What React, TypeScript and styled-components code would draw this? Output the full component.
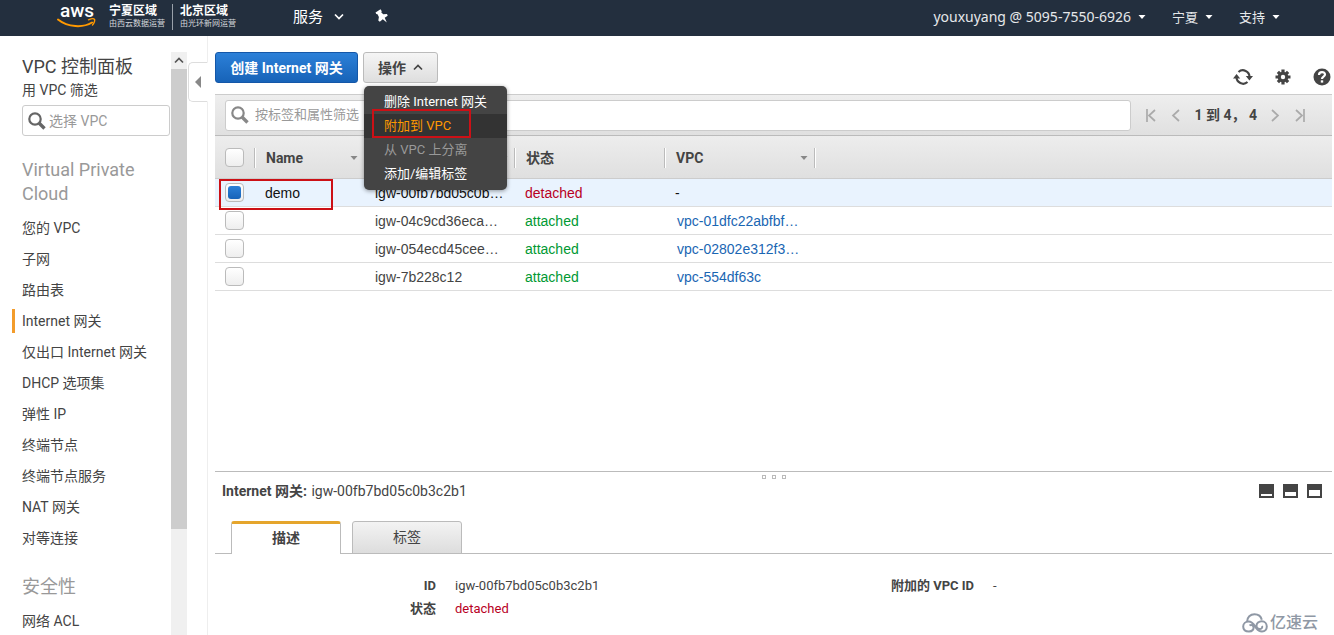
import React, { useState } from 'react';
import styled, { createGlobalStyle, css } from 'styled-components';

const GlobalStyle = createGlobalStyle`
  *, *::before, *::after { box-sizing: border-box; }
  body {
    margin: 0;
    background: #fff;
    color: #444;
    font: 14px/20px Roboto, 'Noto Sans CJK SC', sans-serif;
  }
  button, input { font: inherit; color: inherit; }
  button { margin: 0; padding: 0; border: 0; background: none; cursor: pointer; }
  a { color: inherit; text-decoration: none; }
  h1, h2, ul, dl, dd { margin: 0; padding: 0; font-weight: 400; }
  ul { list-style: none; }
  svg { display: block; flex: none; }
`;

const Page = styled.div`
  display: flex;
  flex-direction: column;
  height: 100vh;
  overflow: hidden;
`;

/* ---------- top bar ---------- */

const TopBar = styled.header`
  display: flex;
  align-items: center;
  flex: none;
  height: 36px;
  padding: 0 54px 0 57px;
  background: #232f3e;
  color: #fff;
`;

const Logo = styled.a`
  display: flex;
  flex-direction: column;
  align-items: center;
  width: 40px;
  height: 36px;
  font: 500 19px/22px Roboto, sans-serif;
  svg { margin-top: -4px; }
`;

const Region = styled.div`
  height: 26px;
  margin: 0 0 2px 12px;
  font-size: 8px;
  line-height: 12px;
  color: #d5d8dc;
  white-space: nowrap;
  & + & {
    margin-left: 7px;
    padding-left: 7px;
    border-left: 1px solid #9aa1aa;
  }
`;

const RegionName = styled.strong`
  display: block;
  font-size: 12px;
  line-height: 14px;
  color: #fff;
`;

const TopButton = styled.button<{ $size?: number }>`
  display: flex;
  align-items: center;
  gap: ${p => (p.$size === 15 ? 11 : 7)}px;
  font-family: 'Noto Sans', 'Noto Sans CJK SC', sans-serif;
  font-size: ${p => p.$size ?? 13}px;
  line-height: 20px;
  color: ${p => (p.$size === 15 ? '#fff' : '#e6e8ea')};
  white-space: nowrap;
`;

const ServiceMenu = styled.nav`
  display: flex;
  align-items: center;
  gap: 31px;
  margin: 0 0 4px 57px;
`;

const AccountMenu = styled.nav`
  display: flex;
  align-items: center;
  gap: 26px;
  margin: 0 0 2px auto;
`;

/* ---------- side navigation ---------- */

const Body = styled.div`
  display: flex;
  flex: 1;
  min-height: 0;
`;

const Sidebar = styled.aside`
  flex: none;
  width: 171px;
  padding: 19px 1px 0 12px;
  overflow: hidden;
`;

const SideTitle = styled.h1`
  padding-left: 10px;
  font-size: 18px;
  line-height: 24px;
`;

const SideLabel = styled.label`
  display: block;
  padding: 1px 0 5px 10px;
`;

const SearchField = styled.div`
  display: flex;
  align-items: center;
  gap: 3px;
  height: 31px;
  padding-left: 5px;
  border: 1px solid #ccc;
  border-radius: 3px;
  background: #fff;
  input {
    flex: 1;
    min-width: 0;
    padding: 0;
    border: 0;
    outline: 0;
    background: none;
  }
  input::placeholder { color: #999; opacity: 1; }
`;

const SideSearch = styled(SearchField)`
  margin-left: 10px;
`;

const SideHeading = styled.h2`
  margin-top: 22px;
  padding: 0 20px 0 10px;
  font-size: 18px;
  line-height: 24px;
  color: #999;
`;

const SideList = styled.ul`
  padding-top: 6px;
`;

const SideItem = styled.li`
  display: flex;
  align-items: center;
  height: 31px;
`;

const SideLink = styled.a<{ $active?: boolean }>`
  padding-left: 7px;
  border-left: 3px solid ${p => (p.$active ? '#f39c2b' : 'transparent')};
  line-height: 24px;
`;

const ScrollTrack = styled.div`
  flex: none;
  width: 16px;
  margin-top: 16px;
  background: #f0f0f0;
`;

const ScrollArrow = styled.button`
  display: flex;
  align-items: center;
  justify-content: center;
  width: 100%;
  height: 17px;
`;

const ScrollThumb = styled.div`
  height: 79%;
  max-height: 460px;
  background: #cdcdcd;
`;

const Gutter = styled.div`
  flex: none;
  width: 21px;
  padding: 26px 0 0 1px;
  border-right: 1px solid #eee;
`;

const CollapseButton = styled.button`
  display: flex;
  align-items: center;
  justify-content: center;
  width: 20px;
  height: 40px;
  border: 1px solid #ddd;
  border-right-color: #fff;
  border-radius: 5px 0 0 5px;
  background: #fff;
`;

/* ---------- main panel ---------- */

const Main = styled.main`
  display: flex;
  flex: 1;
  flex-direction: column;
  min-width: 0;
  padding: 16px 2px 0 7px;
`;

const ActionBar = styled.div`
  display: flex;
  align-items: flex-start;
  gap: 5px;
  height: 42px;
`;

const Button = styled.button<{ $primary?: boolean }>`
  display: flex;
  align-items: center;
  justify-content: center;
  gap: 7px;
  height: 31px;
  padding: 0 14px;
  border: 1px solid #bbb;
  border-radius: 3px;
  background: linear-gradient(#f5f5f5, #dedede);
  font-weight: 700;
  white-space: nowrap;
  ${p =>
    p.$primary &&
    css`
      min-width: 143px;
      border-color: #1457a8;
      background: linear-gradient(#2c80d8, #1763b8);
      color: #fff;
    `}
`;

const MenuAnchor = styled.div`
  position: relative;
`;

const Menu = styled.div`
  position: absolute;
  z-index: 2;
  top: 34px;
  left: 1px;
  width: 143px;
  padding: 4px 0;
  border-radius: 5px;
  background: #444;
  box-shadow: 0 1px 4px rgba(0, 0, 0, 0.4);
`;

const MenuItem = styled.button<{ $active?: boolean }>`
  display: block;
  width: 100%;
  height: 24px;
  padding-left: 20px;
  background: ${p => (p.$active ? '#333' : 'none')};
  color: ${p => (p.$active ? '#f90' : '#fff')};
  font-size: 13px;
  text-align: left;
  white-space: nowrap;
  &:disabled { color: #999; }
`;

const MenuHighlight = styled.div`
  position: absolute;
  top: 23px;
  left: 8px;
  width: 99px;
  height: 29px;
  border: 2px solid #cc1016;
  pointer-events: none;
`;

const Tools = styled.div`
  display: flex;
  align-items: center;
  align-self: flex-end;
  gap: 22px;
  height: 34px;
  margin: 0 1px 0 auto;
`;

const FilterBar = styled.div`
  display: flex;
  align-items: center;
  flex: none;
  height: 42px;
  padding: 0 26px 0 10px;
  border-top: 1px solid #ccc;
  border-bottom: 1px solid #bbb;
  background: linear-gradient(#eee, #e0e0e0);
`;

const FilterField = styled(SearchField)`
  flex: 1;
  gap: 6px;
  font-size: 13px;
`;

const Pager = styled.div`
  display: flex;
  align-items: center;
  gap: 12px;
  margin-left: 14px;
  font-weight: 700;
`;

const PagerText = styled.span`
  padding: 0 1px;
  white-space: pre;
`;

const Grid = styled.table`
  width: 100%;
  border-collapse: separate;
  border-spacing: 0;
  table-layout: fixed;
`;

const Cell = styled.td`
  height: 28px;
  padding: 0 0 0 10px;
  border-bottom: 1px solid #ddd;
  white-space: nowrap;
`;

const HeadCell = styled.th`
  height: 43px;
  padding: 1px 0 0;
  border-bottom: 1px solid #ccc;
  text-align: left;
`;

const HeadRow = styled.tr`
  background: linear-gradient(#ededed, #dfdfdf);
`;

const HeadInner = styled.div<{ $start?: number }>`
  display: flex;
  align-items: center;
  height: 20px;
  padding: 0 6px 0 ${p => p.$start ?? 11}px;
  border-right: 1px solid #bbb;
  box-shadow: 1px 0 #fff;
  svg { margin-left: auto; }
`;

const Row = styled.tr<{ $selected?: boolean }>`
  background: ${p => (p.$selected ? '#e9f3fe' : '#fff')};
  color: ${p => (p.$selected ? '#111' : '#444')};
  font-family: 'Liberation Sans', 'Noto Sans CJK SC', sans-serif;
`;

const RowHighlight = styled.span`
  position: absolute;
  top: -4px;
  left: -6px;
  width: 114px;
  height: 31px;
  border: 2px solid #cc1016;
  pointer-events: none;
`;

const CheckWrap = styled.span`
  position: relative;
  display: flex;
`;

const Check = styled.input`
  appearance: none;
  display: flex;
  align-items: center;
  justify-content: center;
  width: 19px;
  height: 19px;
  margin: 0;
  border: 1px solid #bbb;
  border-radius: 4px;
  background: linear-gradient(#fff, #eee);
  &:checked::before {
    content: '';
    width: 13px;
    height: 13px;
    border-radius: 3px;
    background: linear-gradient(#2c80d8, #1763b8);
  }
`;

const Status = styled.span<{ $value: string }>`
  color: ${p => (p.$value === 'attached' ? '#093' : '#b8001f')};
`;

const VpcLink = styled.a`
  padding-left: 2px;
  color: #1a66b3;
`;

/* ---------- details ---------- */

const GridArea = styled.div`
  flex: 1;
  min-height: 0;
`;

const Details = styled.section`
  flex: none;
  height: 164px;
  border-top: 1px solid #bbb;
`;

const Grip = styled.div`
  display: flex;
  justify-content: center;
  gap: 6px;
  height: 8px;
  padding-top: 3px;
  span {
    width: 4px;
    height: 4px;
    border: 1px solid #bbb;
  }
`;

const DetailsHead = styled.div`
  display: flex;
  align-items: center;
  justify-content: space-between;
  height: 22px;
  padding: 0 10px 0 7px;
  strong { margin-right: 1px; }
`;

const PaneButtons = styled.div`
  display: flex;
  gap: 9px;
`;

const PaneButton = styled.button<{ $open: number }>`
  display: flex;
  align-items: flex-end;
  width: 15px;
  height: 14px;
  padding: 0 2px 2px;
  background: #444;
  &::after {
    content: '';
    width: 100%;
    height: ${p => p.$open}px;
    background: #fff;
  }
`;

const Tabs = styled.div`
  display: flex;
  gap: 11px;
  margin-top: 19px;
  padding-left: 16px;
  box-shadow: inset 0 -1px #bbb;
`;

const Tab = styled.button<{ $active?: boolean }>`
  width: 110px;
  height: 33px;
  padding-bottom: 2px;
  border: 1px solid #bbb;
  border-radius: 3px 3px 0 0;
  background: linear-gradient(#f3f3f3, #ddd);
  ${p =>
    p.$active &&
    css`
      border-top: 3px solid #e5a52c;
      border-bottom: 0;
      background: #fff;
      font-weight: 700;
    `}
`;

const Facts = styled.dl`
  display: grid;
  grid-template-columns: 221px 1fr 104px 339px;
  column-gap: 19px;
  padding-top: 20px;
  font-size: 13px;
  line-height: 23px;
  dt { font-weight: 700; text-align: right; white-space: nowrap; }
`;

const Watermark = styled.div`
  position: absolute;
  right: 16px;
  bottom: 2px;
  display: flex;
  align-items: center;
  gap: 2px;
  color: #8f98a5;
  font-size: 16px;
  font-weight: 500;
`;

/* ---------- icons ---------- */

const Caret = ({ color = '#fff' }: { color?: string }) => (
  <svg width="8" height="4" viewBox="0 0 8 4"><path d="M.5 0h7L4 4z" fill={color} /></svg>
);

const Chevron = ({ up, color = '#fff' }: { up?: boolean; color?: string }) => (
  <svg width="10" height="7" viewBox="0 0 10 7" fill="none" stroke={color} strokeWidth="1.7">
    <path d={up ? 'M1 5.500l4-4 4 4' : 'M1 1.500l4 4 4-4'} />
  </svg>
);

const Smile = () => (
  <svg width="40" height="11" viewBox="0 0 40 11">
    <path d="M1 1.500C11 9.500 26 10 35 4.500" fill="none" stroke="#f90" strokeWidth="2" strokeLinecap="round" />
    <path d="M31.500 1.800c2.500-1 5.500-1.200 6-.4.500 1-.3 4-2 5.600" fill="none" stroke="#f90" strokeWidth="1.400" strokeLinecap="round" />
  </svg>
);

const Pin = () => (
  <svg width="13" height="14" viewBox="0 0 13 14" fill="#fff">
    <path d="M.5 3.500L5.500.3l1.300 2-.6 1 2 2 3.800-.2.700 1.700-3 2L11.800 13.500 7.800 10.300 4.800 12.800 3.300 11.500l.6-3.500L2.500 5.300 1.300 5z" />
  </svg>
);

const Magnifier = ({ color = '#666' }: { color?: string }) => (
  <svg width="18" height="18" viewBox="0 0 18 18" fill="none" stroke={color}>
    <circle cx="7" cy="7" r="5.700" strokeWidth="2.200" />
    <path d="M11 11l5.500 5.500" strokeWidth="3.400" />
  </svg>
);

const Refresh = () => (
  <svg width="20" height="18" viewBox="0 0 20 18">
    <g fill="none" stroke="#444" strokeWidth="2.200">
      <path d="M5.500 4A6.600 6.600 0 0 1 16.500 9" />
      <path d="M14.500 14A6.600 6.600 0 0 1 3.500 9" />
    </g>
    <path d="M0 10.500l3.600-4.500 3.600 4.500zM12.800 8H20l-3.600 4.500z" fill="#444" />
  </svg>
);

const Gear = () => (
  <svg width="16" height="16" viewBox="0 0 16 16">
    <path d="M8 .5v15M.5 8h15M2.900 2.900l10.200 10.200M13.100 2.900L2.900 13.100" stroke="#444" strokeWidth="3.200" />
    <circle cx="8" cy="8" r="5.300" fill="#444" />
    <circle cx="8" cy="8" r="2.200" fill="#fff" />
  </svg>
);

const Help = () => (
  <svg width="18" height="18" viewBox="0 0 18 18">
    <circle cx="9" cy="9" r="8.500" fill="#444" />
    <path d="M6 7c0-4 6-3.700 6-.4C12 8.800 9 8.600 9 11" fill="none" stroke="#fff" strokeWidth="2.200" />
    <rect x="7.800" y="12.300" width="2.400" height="2.300" fill="#fff" />
  </svg>
);

const PageArrow = ({ back, end }: { back?: boolean; end?: boolean }) => (
  <svg width="12" height="14" viewBox="0 0 12 14" fill="none" stroke="#aaa" strokeWidth="1.700">
    <path d={back ? 'M10 2L4 7.500l6 5.500' : 'M2 2l6 5.500L2 13'} />
    {end && <path d={back ? 'M2 1v13' : 'M10 1v13'} />}
  </svg>
);

const Cloud = () => (
  <svg width="26" height="20" viewBox="0 0 26 20" fill="none" stroke="currentColor" strokeWidth="2">
    <path d="M5 9C5 4 8.500 1.200 12.500 1.200c4 0 6.500 2.300 7.300 5.600" />
    <path d="M7.500 12.500c1.500-1 3.500-.5 4 1.500s-1 4.500-4.500 4.500c-3.500 0-5.800-2-5.800-5s2.500-5 5.300-5c4.500 0 6 4 8 7s4 3 5.500 3c3 0 4.800-2.200 4.800-5s-2-5.300-5-5.300-5.300 2-5.300 4.500 1.800 3.500 3.500 3.300 2.700-1.500 2-3" />
  </svg>
);

/* ---------- data ---------- */

const vpcLinks = ['您的 VPC', '子网', '路由表', 'Internet 网关', '仅出口 Internet 网关', 'DHCP 选项集', '弹性 IP', '终端节点', '终端节点服务', 'NAT 网关', '对等连接'];

const gateways = [
  { name: 'demo', id: 'igw-00fb7bd05c0b…', status: 'detached', vpc: '' },
  { name: '', id: 'igw-04c9cd36eca…', status: 'attached', vpc: 'vpc-01dfc22abfbf…' },
  { name: '', id: 'igw-054ecd45cee…', status: 'attached', vpc: 'vpc-02802e312f3…' },
  { name: '', id: 'igw-7b228c12', status: 'attached', vpc: 'vpc-554df63c' },
];

export default function App() {
  const [selected, setSelected] = useState(0);

  return (
    <Page>
      <GlobalStyle />
      <TopBar>
        <Logo href="#">aws<Smile /></Logo>
        <Region><RegionName>宁夏区域</RegionName>由西云数据运营</Region>
        <Region><RegionName>北京区域</RegionName>由光环新网运营</Region>
        <ServiceMenu>
          <TopButton $size={15}>服务<Chevron /></TopButton>
          <TopButton aria-label="固定"><Pin /></TopButton>
        </ServiceMenu>
        <AccountMenu>
          <TopButton $size={14}>youxuyang @ 5095-7550-6926<Caret /></TopButton>
          <TopButton>宁夏<Caret /></TopButton>
          <TopButton>支持<Caret /></TopButton>
        </AccountMenu>
      </TopBar>

      <Body>
        <Sidebar>
          <SideTitle>VPC 控制面板</SideTitle>
          <SideLabel htmlFor="vpc-filter">用 VPC 筛选</SideLabel>
          <SideSearch>
            <Magnifier />
            <input id="vpc-filter" placeholder="选择 VPC" />
          </SideSearch>
          <SideHeading>Virtual Private Cloud</SideHeading>
          <SideList>
            {vpcLinks.map(text => (
              <SideItem key={text}>
                <SideLink href="#" $active={text === 'Internet 网关'}>{text}</SideLink>
              </SideItem>
            ))}
          </SideList>
          <SideHeading>安全性</SideHeading>
          <SideList>
            <SideItem><SideLink href="#">网络 ACL</SideLink></SideItem>
          </SideList>
        </Sidebar>
        <ScrollTrack>
          <ScrollArrow aria-label="向上滚动"><Chevron up color="#555" /></ScrollArrow>
          <ScrollThumb />
        </ScrollTrack>
        <Gutter>
          <CollapseButton aria-label="折叠导航">
            <svg width="6" height="12" viewBox="0 0 6 12"><path d="M6 0v12L0 6z" fill="#888" /></svg>
          </CollapseButton>
        </Gutter>

        <Main>
          <ActionBar>
            <Button $primary>创建 Internet 网关</Button>
            <MenuAnchor>
              <Button>操作<Chevron up color="#444" /></Button>
              <Menu>
                <MenuItem>删除 Internet 网关</MenuItem>
                <MenuItem $active>附加到 VPC</MenuItem>
                <MenuItem disabled>从 VPC 上分离</MenuItem>
                <MenuItem>添加/编辑标签</MenuItem>
                <MenuHighlight />
              </Menu>
            </MenuAnchor>
            <Tools>
              <button aria-label="刷新"><Refresh /></button>
              <button aria-label="设置"><Gear /></button>
              <button aria-label="帮助"><Help /></button>
            </Tools>
          </ActionBar>

          <FilterBar>
            <FilterField>
              <Magnifier color="#888" />
              <input aria-label="筛选" placeholder="按标签和属性筛选" />
            </FilterField>
            <Pager>
              <button aria-label="第一页"><PageArrow back end /></button>
              <button aria-label="上一页"><PageArrow back /></button>
              <PagerText>1 到 4， 4</PagerText>
              <button aria-label="下一页"><PageArrow /></button>
              <button aria-label="最后一页"><PageArrow end /></button>
            </Pager>
          </FilterBar>

          <GridArea>
            <Grid>
              <colgroup>
                <col width="40" />
                <col width="110" />
                <col width="150" />
                <col width="150" />
                <col width="150" />
                <col />
              </colgroup>
              <thead>
                <HeadRow>
                  <HeadCell>
                    <HeadInner $start={10}><Check type="checkbox" aria-label="全选" /></HeadInner>
                  </HeadCell>
                  <HeadCell><HeadInner>Name<Caret color="#888" /></HeadInner></HeadCell>
                  <HeadCell aria-label="ID"><HeadInner><Caret color="#888" /></HeadInner></HeadCell>
                  <HeadCell><HeadInner>状态</HeadInner></HeadCell>
                  <HeadCell><HeadInner>VPC<Caret color="#888" /></HeadInner></HeadCell>
                  <HeadCell />
                </HeadRow>
              </thead>
              <tbody>
                {gateways.map((g, i) => (
                  <Row key={g.id} $selected={i === selected}>
                    <Cell>
                      <CheckWrap>
                        <Check
                          type="checkbox"
                          aria-label={g.id}
                          checked={i === selected}
                          onChange={() => setSelected(i)}
                        />
                        {i === 0 && <RowHighlight />}
                      </CheckWrap>
                    </Cell>
                    <Cell>{g.name}</Cell>
                    <Cell>{g.id}</Cell>
                    <Cell><Status $value={g.status}>{g.status}</Status></Cell>
                    <Cell>{g.vpc ? <VpcLink href="#">{g.vpc}</VpcLink> : '-'}</Cell>
                    <Cell />
                  </Row>
                ))}
              </tbody>
            </Grid>
          </GridArea>

          <Details>
            <Grip><span /><span /><span /></Grip>
            <DetailsHead>
              <div><strong>Internet 网关:</strong> igw-00fb7bd05c0b3c2b1</div>
              <PaneButtons>
                <PaneButton $open={2} aria-label="最小化" />
                <PaneButton $open={4} aria-label="半屏" />
                <PaneButton $open={6} aria-label="最大化" />
              </PaneButtons>
            </DetailsHead>
            <Tabs role="tablist">
              <Tab role="tab" aria-selected $active>描述</Tab>
              <Tab role="tab">标签</Tab>
            </Tabs>
            <Facts>
              <dt>ID</dt>
              <dd>igw-00fb7bd05c0b3c2b1</dd>
              <dt>附加的 VPC ID</dt>
              <dd>-</dd>
              <dt>状态</dt>
              <dd><Status $value="detached">detached</Status></dd>
            </Facts>
          </Details>
        </Main>
      </Body>
      <Watermark><Cloud />亿速云</Watermark>
    </Page>
  );
}
